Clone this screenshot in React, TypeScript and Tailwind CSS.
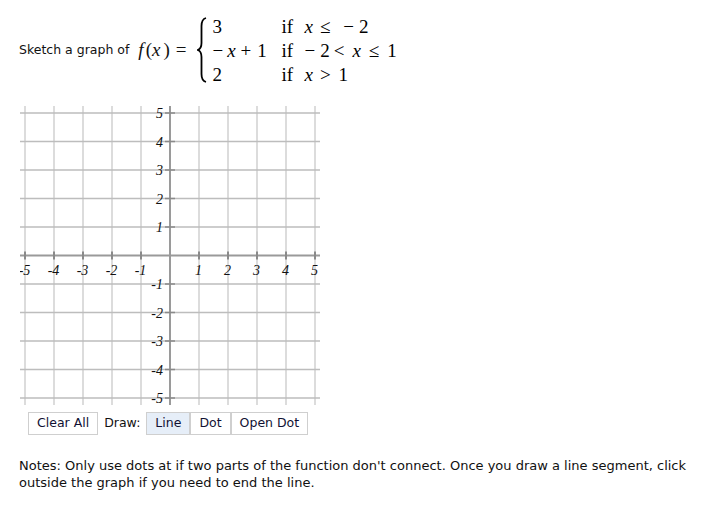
import React from "react";

const TICKS = [-5, -4, -3, -2, -1, 1, 2, 3, 4, 5];

// pixel position inside the 300x300 graph
const px = (i: number) => 150 + 29 * i;
const py = (j: number) => 150.5 - 28.5 * j;

const Graph = () => (
  <svg width="300" height="300" viewBox="0 0 300 300" className="block">
    {/* vertical grid */}
    {TICKS.map((i) => (
      <line key={`v${i}`} x1={px(i)} y1={1} x2={px(i)} y2={300} stroke="#dcdcdc" strokeWidth={2} />
    ))}
    {/* horizontal grid */}
    {TICKS.map((j) => (
      <line key={`h${j}`} x1={0} y1={py(j)} x2={300} y2={py(j)} stroke="#bdbdbd" strokeWidth={1.5} />
    ))}
    {/* axes */}
    <line x1={0} y1={py(0)} x2={300} y2={py(0)} stroke="#9a9a9a" strokeWidth={2} />
    <line x1={px(0)} y1={1} x2={px(0)} y2={300} stroke="#9a9a9a" strokeWidth={2} />
    {/* ticks */}
    {TICKS.map((i) => (
      <line key={`tx${i}`} x1={px(i)} y1={py(0) - 4} x2={px(i)} y2={py(0) + 4} stroke="#8a8a8a" strokeWidth={2} />
    ))}
    {TICKS.map((j) => (
      <line key={`ty${j}`} x1={px(0) - 5} y1={py(j)} x2={px(0) + 5} y2={py(j)} stroke="#8a8a8a" strokeWidth={1.5} />
    ))}
    {/* labels */}
    <g fontFamily="'Liberation Serif', serif" fontStyle="italic" fontSize="14" fill="#111">
      {TICKS.map((i) => (
        <text key={`lx${i}`} x={px(i) - 0.5} y={py(0) + 19} textAnchor="middle">
          {i}
        </text>
      ))}
      {TICKS.map((j) => (
        <text key={`ly${j}`} x={143} y={py(j) + 5} textAnchor="end">
          {j}
        </text>
      ))}
    </g>
  </svg>
);

const Row = ({ a, c }: { a: React.ReactNode; c: React.ReactNode }) => (
  <div className="flex items-center h-[24px] whitespace-nowrap">
    <div className="w-[69px] flex">{a}</div>
    <div className="w-[23px]">if</div>
    <div className="flex">{c}</div>
  </div>
);

const Piece = () => (
  <div className="flex items-center font-['Liberation_Serif',serif] text-[19px] text-black leading-none">
    <svg width="10" height="66" viewBox="0 0 10 66" className="mr-[5px]">
      <path
        d="M9 1 C5.5 2 4.5 5 4.5 9 L4.5 26 C4.5 30 3.5 32 0.8 33 C3.5 34 4.5 36 4.5 40 L4.5 57 C4.5 61 5.5 64 9 65"
        fill="none"
        stroke="#000"
        strokeWidth={1.8}
      />
    </svg>
    <div className="flex flex-col">
      <Row
        a={<span>3</span>}
        c={
          <>
            <i>x</i>
            <span className="ml-[7px]">≤</span>
            <span className="ml-[13px]">−</span>
            <span className="ml-[5px]">2</span>
          </>
        }
      />
      <Row
        a={
          <>
            <span>−</span>
            <i className="ml-[4px]">x</i>
            <span className="ml-[5px]">+</span>
            <span className="ml-[6px]">1</span>
          </>
        }
        c={
          <>
            <span>−</span>
            <span className="ml-[5px]">2</span>
            <span className="ml-[4px]">&lt;</span>
            <i className="ml-[8px]">x</i>
            <span className="ml-[8px]">≤</span>
            <span className="ml-[8px]">1</span>
          </>
        }
      />
      <Row
        a={<span>2</span>}
        c={
          <>
            <i>x</i>
            <span className="ml-[7px]">&gt;</span>
            <span className="ml-[8px]">1</span>
          </>
        }
      />
    </div>
  </div>
);

const Btn = ({ children, active }: { children: React.ReactNode; active?: boolean }) => (
  <button
    className={`h-[23px] px-[8px] border border-[#cfcfcf] text-[12.5px] text-[#111133] leading-none ${
      active ? "bg-[#e6eef8]" : "bg-white"
    }`}
  >
    {children}
  </button>
);

export default function App() {
  return (
    <div className="w-[711px] h-[505px] bg-white font-['DejaVu_Sans',sans-serif] text-[12.5px] text-[#111]">
      {/* Header */}
      <div className="flex items-center h-[70px] mt-[15px] pl-[19px]">
        <span className="mr-[9px]">Sketch a graph of</span>
        <span className="flex items-center font-['Liberation_Serif',serif] text-[19px] mr-[11px] whitespace-nowrap">
          <i>f</i>
          <span className="ml-[2px]">(</span>
          <i>x</i>
          <span className="ml-[3px]">)</span>
          <span className="ml-[6px]">=</span>
        </span>
        <Piece />
      </div>

      {/* Graph */}
      <div className="pl-[20px] pt-[20px]">
        <Graph />
      </div>

      {/* Tools */}
      <div className="flex items-center pl-[28px] pt-[7px]">
        <Btn>Clear All</Btn>
        <span className="mx-[6px]">Draw:</span>
        <Btn active>Line</Btn>
        <Btn>Dot</Btn>
        <Btn>Open Dot</Btn>
      </div>

      {/* Notes */}
      <p className="pl-[19px] pr-[20px] pt-[22px] text-[13px] leading-[17px]">
        Notes: Only use dots at if two parts of the function don't connect. Once you draw a line segment, click
        outside the graph if you need to end the line.
      </p>
    </div>
  );
}
